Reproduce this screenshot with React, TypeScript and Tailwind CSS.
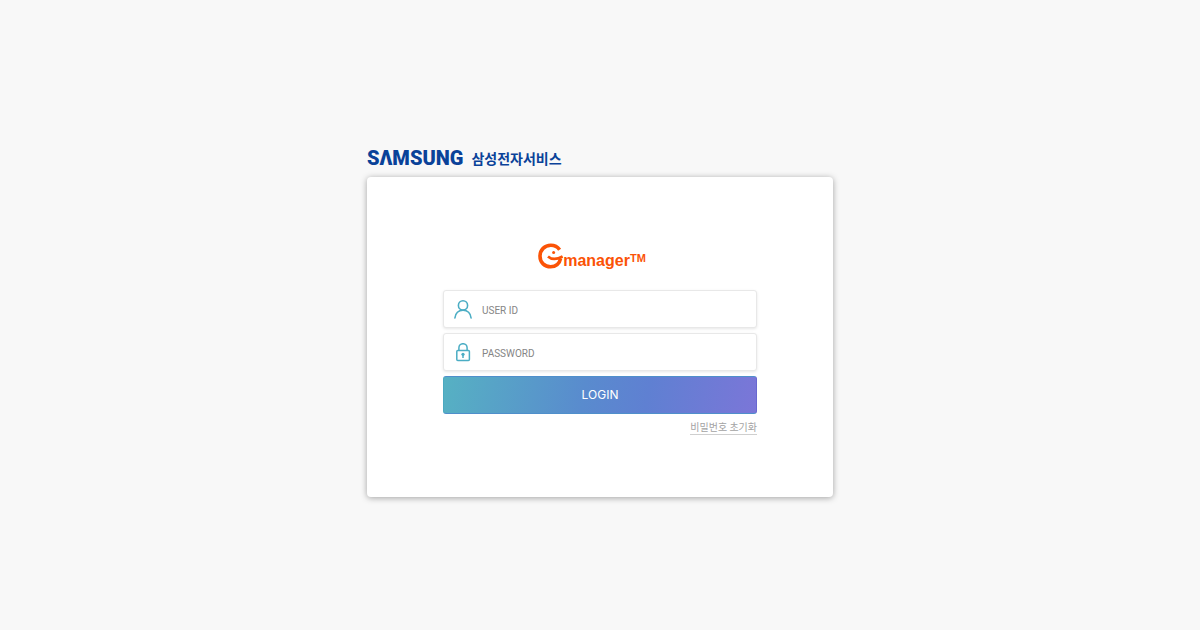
import React from "react";

function SamsungLogo() {
  return (
    <h1 className="flex h-[26px] items-center gap-2 whitespace-nowrap text-[#0a4299]">
      <span role="img" aria-label="SAMSUNG" className="font-['Roboto','Liberation_Sans',sans-serif] text-[20px] leading-6 font-black">
        SΛMSUNG
      </span>
      <span className="font-['Noto_Sans_CJK_KR',sans-serif] text-[14px] leading-6 font-bold">
        삼성전자서비스
      </span>
    </h1>
  );
}

function GManagerLogo() {
  return (
    <h2 className="flex h-7 items-start justify-center pr-4 text-[#fb5306]">
      <svg aria-label="G" role="img" width="25" height="27" viewBox="0 0 25 27" fill="none" stroke="currentColor">
        <path d="M21.6 6.8C19.6 3.8 16.4 2.3 12.8 2.3C6.6 2.3 2 6.9 2 13.2C2 19.5 6.6 23.8 12.6 23.8C17.8 23.8 21.6 20.6 22.6 15.4" strokeWidth="3.6" />
        <path d="M10 13.4C13.4 16.5 18.6 16.8 24.6 13.4" strokeWidth="2.7" />
        <circle cx="15.6" cy="9.6" r="1.5" fill="currentColor" stroke="none" />
      </svg>
      <span className="pt-2 font-['Liberation_Sans',sans-serif] text-[16px] leading-5 font-bold">manager</span>
      <span className="pt-[7px] font-['Liberation_Sans',sans-serif] text-[11px] leading-4 font-bold">TM</span>
    </h2>
  );
}

function UserIcon() {
  return (
    <svg aria-hidden="true" width="18" height="19" viewBox="0 0 18 19" fill="none" stroke="#4badc4" strokeWidth="1.6" strokeLinecap="round">
      <circle cx="9" cy="5.4" r="4.6" />
      <path d="M.9 18C1.5 13.2 4.7 10.2 9 10.2S16.5 13.2 17.1 18" />
    </svg>
  );
}

function LockIcon() {
  return (
    <svg aria-hidden="true" width="18" height="19" viewBox="0 0 18 19" fill="none" stroke="#4badc4" strokeWidth="1.5">
      <rect x="2.8" y="7.4" width="12.6" height="10.2" rx="1" />
      <path d="M4.9 7.2V4.8A4.1 4.1 0 0 1 13.1 4.8V7.2" />
      <circle cx="9" cy="11.3" r="1.6" fill="#4badc4" stroke="none" />
      <path d="M9 11.6V15" />
    </svg>
  );
}

type FieldProps = {
  id: string;
  label: string;
  type: string;
  icon: React.ReactNode;
};

function Field({ id, label, type, icon }: FieldProps) {
  return (
    <div className="flex h-[38px] items-center gap-[10px] rounded-[3px] border border-[#e8e8e8] bg-white pl-[10px] shadow-[0_1px_3px_rgba(0,0,0,0.1)]">
      <label htmlFor={id} aria-label={label}>
        {icon}
      </label>
      <input
        id={id}
        type={type}
        placeholder={label}
        className="h-full min-w-0 flex-1 bg-transparent pt-[2px] font-['Roboto',sans-serif] text-[10px] text-[#555] outline-none placeholder:text-[#858585]"
      />
    </div>
  );
}

export default function App() {
  return (
    <main className="flex min-h-screen flex-col items-center justify-center bg-[#f8f8f8] px-4 pt-3">
      <div className="w-full max-w-[466px]">
        <SamsungLogo />
        <section className="mt-[6px] rounded-[4px] bg-white px-[76px] pt-[66px] pb-[62px] shadow-[0_1px_6px_rgba(0,0,0,0.35)]">
          <GManagerLogo />
          <form className="mt-[19px] flex flex-col gap-[5px]" onSubmit={(event) => event.preventDefault()}>
            <Field id="user-id" label="USER ID" type="text" icon={<UserIcon />} />
            <Field id="password" label="PASSWORD" type="password" icon={<LockIcon />} />
            <button
              type="submit"
              className="h-[38px] rounded-[3px] border border-[#4f8fcb] border-r-[#6868d0] border-l-[#4ba9c1] bg-[linear-gradient(100deg,#56b1c3_0%,#598bce_45%,#5f80d2_65%,#7b76d8_100%)] font-['Inter',sans-serif] text-[12px] text-white"
            >
              LOGIN
            </button>
            <a
              href="#reset"
              className="mt-[2px] self-end border-b border-[#cfcfcf] pb-px font-['Noto_Sans_CJK_KR',sans-serif] text-[10px] leading-3 text-[#a3a3a3]"
            >
              비밀번호 초기화
            </a>
          </form>
        </section>
      </div>
    </main>
  );
}
